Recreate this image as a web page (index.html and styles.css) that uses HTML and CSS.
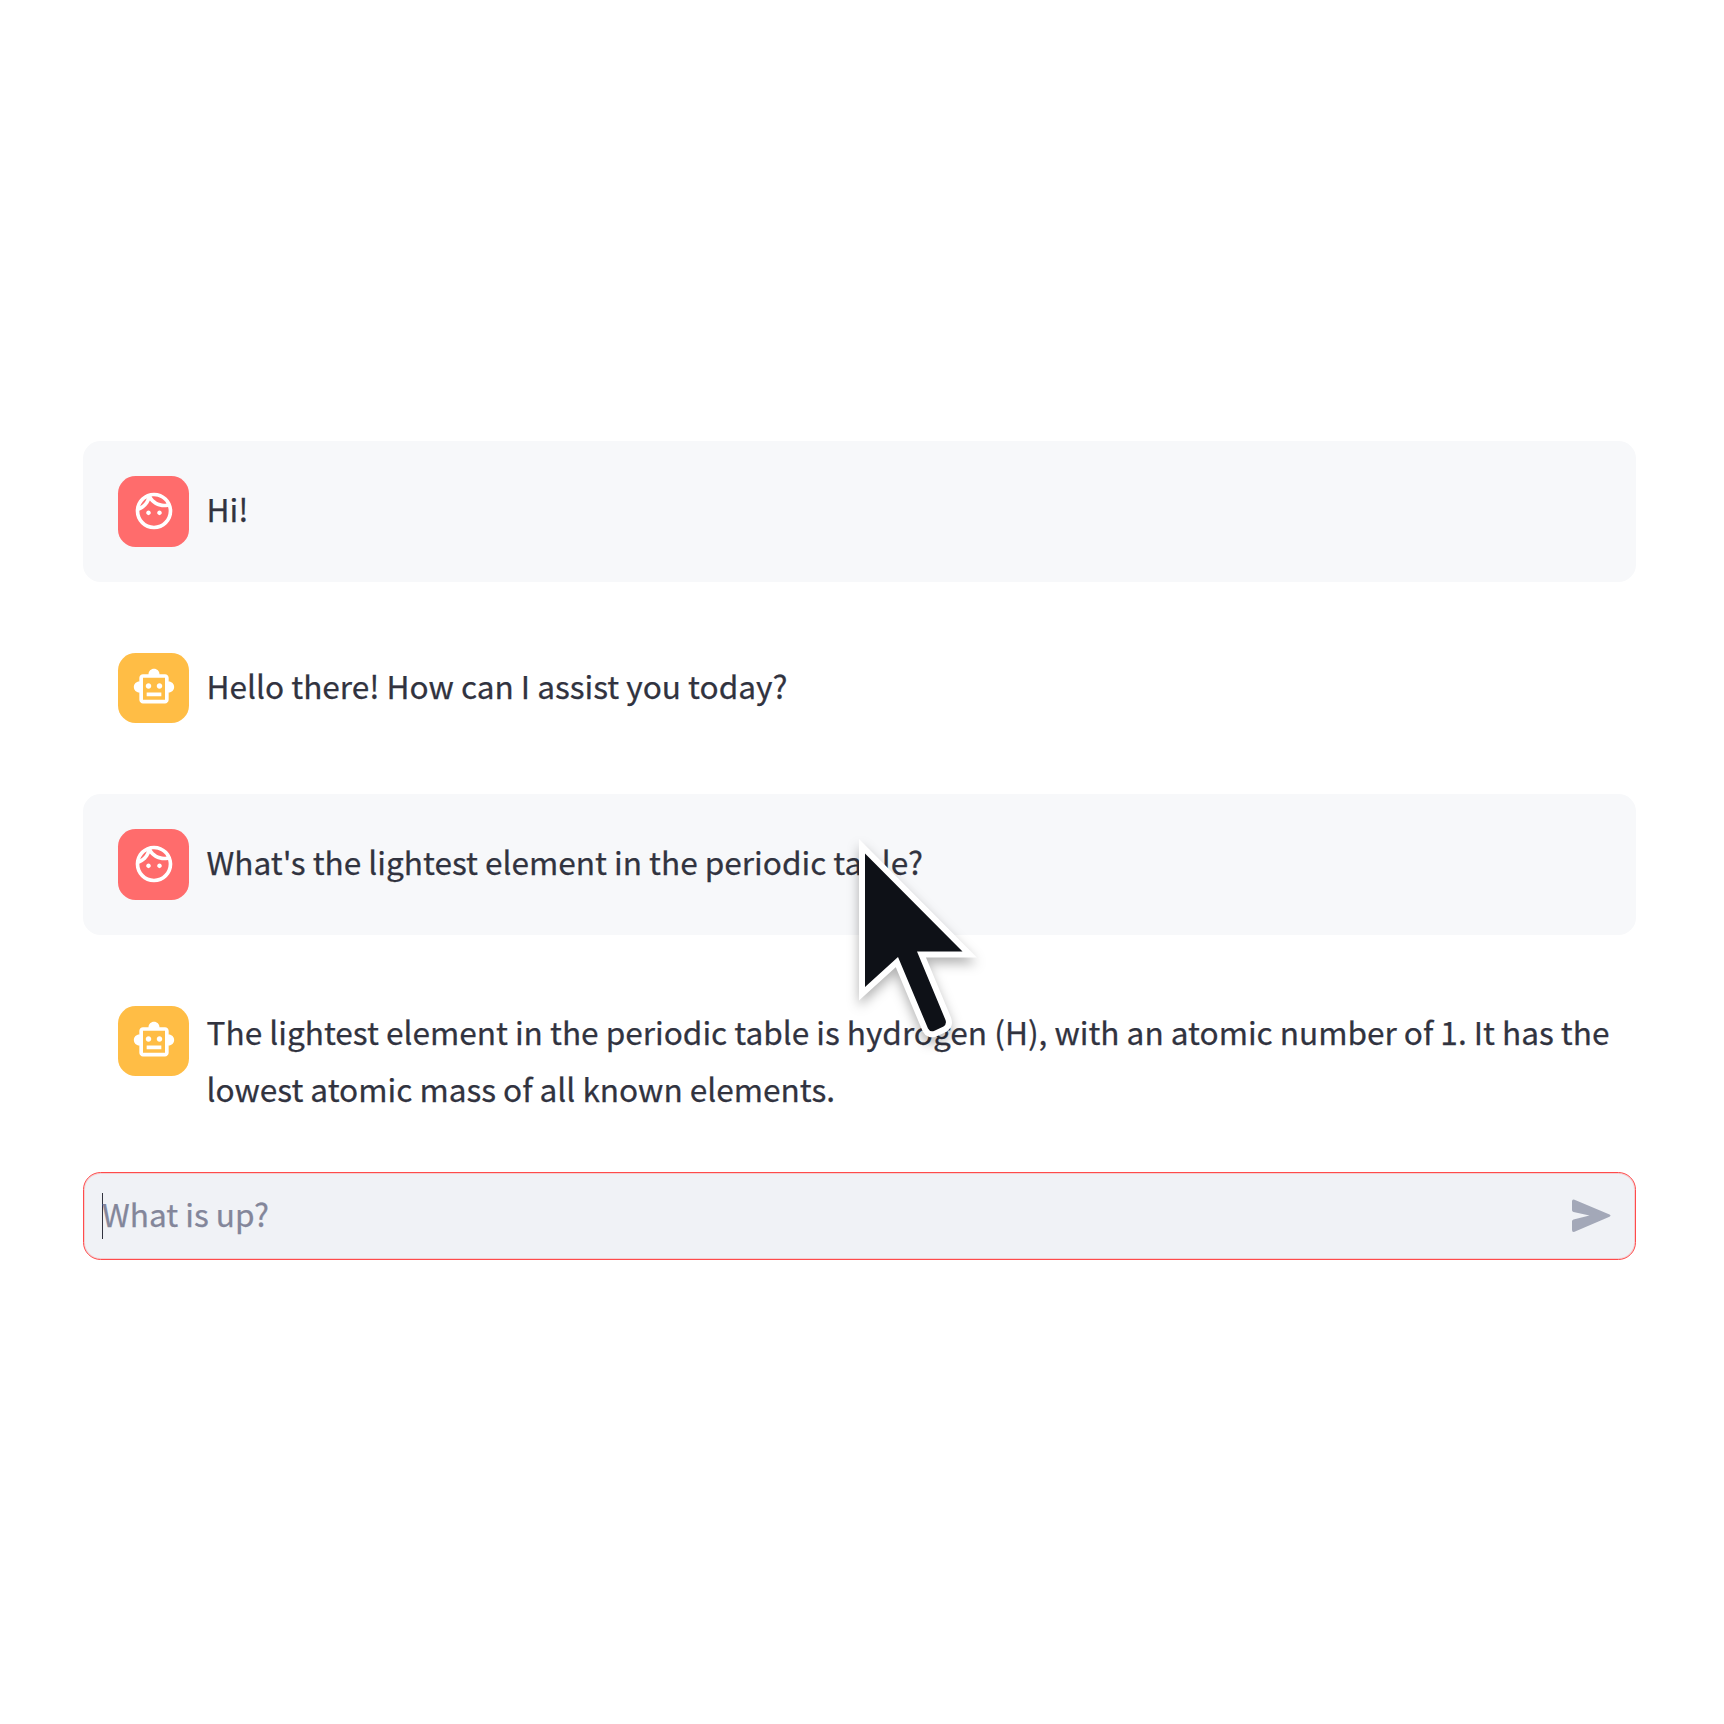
FILE: index.html
```html
<!DOCTYPE html>
<html lang="en">
<head>
<meta charset="utf-8">
<title>Chat</title>
<link rel="stylesheet" href="styles.css">
</head>
<body>
<svg class="defs" aria-hidden="true">
  <symbol id="face" viewBox="0 0 24 24"><path fill-rule="evenodd" d="M10.25 13c0 .69-.56 1.25-1.25 1.25S7.75 13.69 7.75 13s.56-1.25 1.25-1.25 1.25.56 1.25 1.25zM15 11.75c-.69 0-1.25.56-1.25 1.25s.56 1.25 1.25 1.25 1.25-.56 1.25-1.25-.56-1.25-1.25-1.25zm7 .25c0 5.52-4.48 10-10 10S2 17.52 2 12 6.48 2 12 2s10 4.48 10 10zM10.66 4.12C12.06 6.44 14.6 8 17.5 8c.46 0 .91-.05 1.34-.12C17.44 5.56 14.9 4 12 4c-.46 0-.91.05-1.34.12zM4.42 9.47c1.71-.97 3.03-2.55 3.66-4.44C6.37 6 5.05 7.58 4.42 9.47zM20 12c0-.78-.12-1.53-.33-2.24-.7.15-1.42.24-2.17.24-3.13 0-5.92-1.44-7.76-3.69C8.69 8.87 6.6 10.88 4 11.86c.01.04 0 .09 0 .14 0 4.42 3.58 8 8 8s8-3.58 8-8z"/></symbol>
  <symbol id="robot" viewBox="0 0 24 24"><path d="M20 9V7c0-1.1-.9-2-2-2h-3c0-1.66-1.34-3-3-3S9 3.34 9 5H6c-1.1 0-2 .9-2 2v2c-1.66 0-3 1.34-3 3s1.34 3 3 3v4c0 1.1.9 2 2 2h12c1.1 0 2-.9 2-2v-4c1.66 0 3-1.34 3-3s-1.34-3-3-3zm-2 10H6V7h12v12zm-9-6c-.83 0-1.5-.67-1.5-1.5S8.17 10 9 10s1.5.67 1.5 1.5S9.83 13 9 13zm7.5-1.5c0 .83-.67 1.5-1.5 1.5s-1.5-.67-1.5-1.5.67-1.5 1.5-1.5 1.5.67 1.5 1.5zM8 15h8v2H8v-2z"/></symbol>
</svg>
<main class="chat">
  <section class="messages">
    <article class="message user">
      <div class="avatar"><svg class="icon"><use href="#face"/></svg></div>
      <p class="text">Hi!</p>
    </article>
    <article class="message assistant">
      <div class="avatar"><svg class="icon"><use href="#robot"/></svg></div>
      <p class="text">Hello there! How can I assist you today?</p>
    </article>
    <article class="message user">
      <div class="avatar"><svg class="icon"><use href="#face"/></svg></div>
      <p class="text">What's the lightest element in the periodic table?</p>
    </article>
    <article class="message assistant">
      <div class="avatar"><svg class="icon"><use href="#robot"/></svg></div>
      <p class="text">The lightest element in the periodic table is hydrogen (H), with an atomic number of 1. It has the<br>lowest atomic mass of all known elements.</p>
    </article>
  </section>
  <div class="composer">
    <span class="caret"></span>
    <span class="placeholder">What is up?</span>
    <svg class="send" viewBox="0 0 39 34"><path d="M0 2.5Q0 0 2.5 .8L37.5 15.5Q39.5 16.6 37.5 17.7L2.5 32.8Q0 33.5 0 31V22.2Q0 20.8 1.5 20.4L17.5 16.6L1.5 12.9Q0 12.5 0 11.3Z"/></svg>
  </div>
</main>
<svg class="pointer" viewBox="840 820 160 240">
  <path class="pointer-edge" d="M865 853.5L962.5 951.5H917L945.5 1020Q947 1024 943.5 1026.500L934.500 1030.800Q930 1032.500 928 1028.500L898 957L865 987Z"/>
  <path class="pointer-fill" d="M865 853.5L962.5 951.5H917L945.5 1020Q947 1024 943.5 1026.500L934.500 1030.800Q930 1032.500 928 1028.500L898 957L865 987Z"/>
</svg>
</body>
</html>
```
FILE: styles.css
```css
* { box-sizing: border-box; }

body {
  margin: 0;
  background: #fff;
  color: #31333f;
  font-family: "Noto Sans CJK SC", "Noto Sans", sans-serif;
  font-size: 31.6px;
  line-height: 57px;
  -webkit-text-stroke: .25px currentColor;
}

.defs { position: absolute; width: 0; height: 0; }

.chat {
  width: 1553px;
  height: 1724px;
  margin-left: 83px;
  padding-top: 441px;
}

.messages {
  display: flex;
  flex-direction: column;
  gap: 35.5px;
  height: 731px;
}

.message {
  display: flex;
  align-items: flex-start;
  gap: 17.8px;
  padding: 35.2px;
  border-radius: 17.6px;
}

.message.user { background: #f7f8fa; }

.avatar {
  display: flex;
  flex: none;
  align-items: center;
  justify-content: center;
  width: 70.6px;
  height: 70.6px;
  padding: 0 0 1px 1.2px;
  border-radius: 17.6px;
  background: #ffbd45;
}

.user .avatar { background: #ff6c6c; }

.icon { width: 44px; height: 44px; fill: #fff; }

.text {
  margin: 4.2px 0 0;
  white-space: nowrap;
}

.message:last-child .text { margin-top: -2.3px; }

.composer {
  display: flex;
  align-items: center;
  height: 88px;
  padding: 0 24px 0 18px;
  border: 1px solid #ff4b4b;
  border-radius: 17.6px;
  background: #f0f2f6;
  box-shadow: inset 0 0 0 1px rgba(255, 75, 75, .2);
}

.caret { width: 1px; height: 46px; background: #31333f; }

.placeholder {
  flex: 1;
  margin-left: -1px;
  padding-bottom: 5px;
  color: #83869a;
}

.send { width: 39px; height: 34px; fill: #a3a8b8; }

.pointer {
  position: absolute;
  left: 840px;
  top: 820px;
  width: 160px;
  height: 240px;
  filter: drop-shadow(0 6px 6px rgba(0, 0, 0, .3));
}

.pointer-edge { fill: #fff; stroke: #fff; stroke-width: 12; }

.pointer-fill { fill: #0e1117; }
```
